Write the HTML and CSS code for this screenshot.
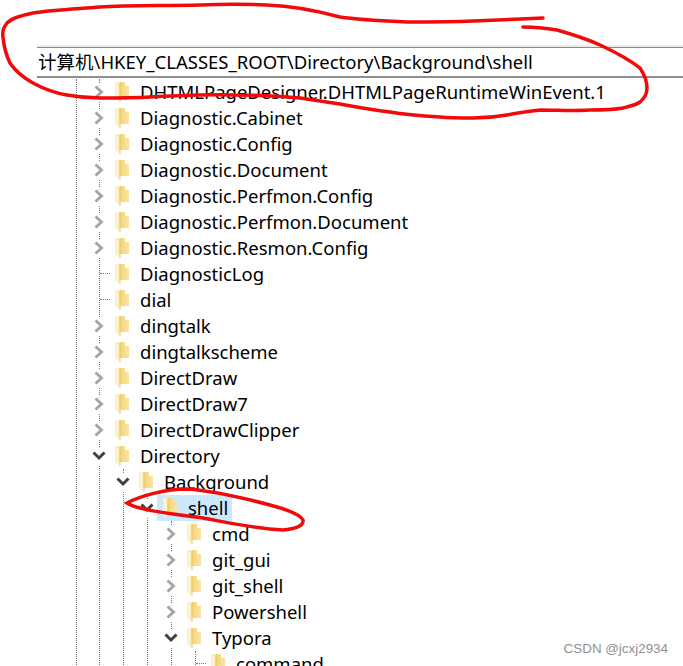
FILE: index.html
```html
<!DOCTYPE html>
<html lang="zh-CN">
<head>
    <meta charset="UTF-8">
    <title>注册表编辑器</title>
    <link rel="stylesheet" href="styles.css">
</head>
<body>
    <svg class="defs" width="0" height="0">
        <defs>
            <linearGradient id="gold" x1="0" y1="0" x2="1" y2="0">
                <stop offset="0" stop-color="#f3cf72"/>
                <stop offset="1" stop-color="#fbe6a6"/>
            </linearGradient>
        </defs>
        <symbol id="folder" viewBox="0 0 14 20">
            <path d="M4 0H10V4H14V16H4Z" fill="url(#gold)"/>
            <path d="M0 0H4.500V20L0 16Z" fill="#fdf1c8"/>
            <path d="M5 1V20" stroke="#e9c76e" stroke-width="1"/>
        </symbol>
        <symbol id="closed" viewBox="0 0 12 14">
            <path d="M2.500 1.500L8.500 7L2.500 12.500" fill="none" stroke="#a6a6a6" stroke-width="3"/>
        </symbol>
        <symbol id="open" viewBox="0 0 14 12">
            <path d="M1.500 2.500L7 8L12.500 2.500" fill="none" stroke="#404040" stroke-width="3"/>
        </symbol>
    </svg>

    <div class="address">计算机\HKEY_CLASSES_ROOT\Directory\Background\shell</div>

    <ul class="tree">
        <li><ul class="branch">
            <li class="row"><span class="toggle"><svg class="chev"><use href="#closed"/></svg></span><svg class="folder"><use href="#folder"/></svg><span class="name">DHTMLPageDesigner.DHTMLPageRuntimeWinEvent.1</span></li>
            <li class="row"><span class="toggle"><svg class="chev"><use href="#closed"/></svg></span><svg class="folder"><use href="#folder"/></svg><span class="name">Diagnostic.Cabinet</span></li>
            <li class="row"><span class="toggle"><svg class="chev"><use href="#closed"/></svg></span><svg class="folder"><use href="#folder"/></svg><span class="name">Diagnostic.Config</span></li>
            <li class="row"><span class="toggle"><svg class="chev"><use href="#closed"/></svg></span><svg class="folder"><use href="#folder"/></svg><span class="name">Diagnostic.Document</span></li>
            <li class="row"><span class="toggle"><svg class="chev"><use href="#closed"/></svg></span><svg class="folder"><use href="#folder"/></svg><span class="name">Diagnostic.Perfmon.Config</span></li>
            <li class="row"><span class="toggle"><svg class="chev"><use href="#closed"/></svg></span><svg class="folder"><use href="#folder"/></svg><span class="name">Diagnostic.Perfmon.Document</span></li>
            <li class="row"><span class="toggle"><svg class="chev"><use href="#closed"/></svg></span><svg class="folder"><use href="#folder"/></svg><span class="name">Diagnostic.Resmon.Config</span></li>
            <li class="row"><span class="toggle leaf"></span><svg class="folder"><use href="#folder"/></svg><span class="name">DiagnosticLog</span></li>
            <li class="row"><span class="toggle leaf"></span><svg class="folder"><use href="#folder"/></svg><span class="name">dial</span></li>
            <li class="row"><span class="toggle"><svg class="chev"><use href="#closed"/></svg></span><svg class="folder"><use href="#folder"/></svg><span class="name">dingtalk</span></li>
            <li class="row"><span class="toggle"><svg class="chev"><use href="#closed"/></svg></span><svg class="folder"><use href="#folder"/></svg><span class="name">dingtalkscheme</span></li>
            <li class="row"><span class="toggle"><svg class="chev"><use href="#closed"/></svg></span><svg class="folder"><use href="#folder"/></svg><span class="name">DirectDraw</span></li>
            <li class="row"><span class="toggle"><svg class="chev"><use href="#closed"/></svg></span><svg class="folder"><use href="#folder"/></svg><span class="name">DirectDraw7</span></li>
            <li class="row"><span class="toggle"><svg class="chev"><use href="#closed"/></svg></span><svg class="folder"><use href="#folder"/></svg><span class="name">DirectDrawClipper</span></li>
            <li class="row"><span class="toggle"><svg class="chev"><use href="#open"/></svg></span><svg class="folder"><use href="#folder"/></svg><span class="name">Directory</span></li>
            <li><ul class="branch">
                <li class="row"><span class="toggle"><svg class="chev"><use href="#open"/></svg></span><svg class="folder"><use href="#folder"/></svg><span class="name">Background</span></li>
                <li><ul class="branch">
                    <li class="row"><span class="toggle"><svg class="chev"><use href="#open"/></svg></span><svg class="folder"><use href="#folder"/></svg><span class="name selected">shell</span></li>
                    <li><ul class="branch">
                        <li class="row"><span class="toggle"><svg class="chev"><use href="#closed"/></svg></span><svg class="folder"><use href="#folder"/></svg><span class="name">cmd</span></li>
                        <li class="row"><span class="toggle"><svg class="chev"><use href="#closed"/></svg></span><svg class="folder"><use href="#folder"/></svg><span class="name">git_gui</span></li>
                        <li class="row"><span class="toggle"><svg class="chev"><use href="#closed"/></svg></span><svg class="folder"><use href="#folder"/></svg><span class="name">git_shell</span></li>
                        <li class="row"><span class="toggle"><svg class="chev"><use href="#closed"/></svg></span><svg class="folder"><use href="#folder"/></svg><span class="name">Powershell</span></li>
                        <li class="row"><span class="toggle"><svg class="chev"><use href="#open"/></svg></span><svg class="folder"><use href="#folder"/></svg><span class="name">Typora</span></li>
                        <li><ul class="branch">
                            <li class="row"><span class="toggle leaf"></span><svg class="folder"><use href="#folder"/></svg><span class="name">command</span></li>
                        </ul></li>
                    </ul></li>
                </ul></li>
            </ul></li>
        </ul></li>
    </ul>

    <!-- marcas de caneta vermelha por cima do print -->
    <svg class="ink" width="683" height="666" viewBox="0 0 683 666">
        <path d="M543 18C520 19 495 20 473 21C450 22 428 22 407 22C385 21 360 20 340 17C318 11 295 6 267 5C245 4 222 4 200 5C165 6 130 5 100 7C75 9 52 10 33 13C20 16 12 18 7 23C3 28 2 32 3 37C4 47 6 55 10 63C16 72 24 78 33 83C44 89 55 93 67 95C78 97 89 98 100 98C117 98 133 98 150 97C178 96 205 94 233 95C256 95 279 96 300 98C314 100 327 102 340 104C357 107 373 110 390 112C407 115 423 116 440 117C451 118 462 118 473 118C485 118 496 117 507 115C518 113 529 111 540 110C557 110 573 111 590 110C602 110 613 110 623 108C631 106 636 105 640 102C645 98 647 93 647 88C647 80 644 74 640 68C630 60 615 52 600 45C585 38 571 34 557 30C545 28 534 27 523 27" fill="none" stroke="#f00a0a" stroke-width="3.500" stroke-linecap="round"/>
        <path d="M270 505C240 497 215 491 187 489C165 489 140 496 127 503C140 511 175 514 203 518C225 522 250 528 283 530C295 529 304 526 303 520C300 514 285 509 270 505" fill="none" stroke="#f00a0a" stroke-width="3.500" stroke-linecap="round"/>
    </svg>

    <div class="mark">CSDN @jcxj2934</div>
</body>
</html>
```

FILE: styles.css
```css
html, body {
    margin: 0;
    height: 666px;
    overflow: hidden;
    background-color: #fff;
}

body {
    font-family: "Noto Sans", "Noto Sans CJK SC", sans-serif;
    color: #000;
    position: relative;
}

.defs {
    display: block;
    height: 0;
}

.address {
    margin: 47px 0 0 37px;
    padding-left: 1px;
    height: 28px;
    line-height: 28px;
    font-size: 18.500px;
    border-top: 1px solid #8a8a8a;
    border-bottom: 2px solid #8f8f8f;
    box-shadow: 0 -2px 0 #ececec;
    white-space: nowrap;
}

ul {
    list-style: none;
    margin: 0;
    padding: 0;
}

.tree {
    margin: 1px 0 0 76px;
    border-left: 1px dotted #777;
}

.tree > li > .branch {
    margin-left: 22px;
}

.branch {
    margin-left: 23px;
    border-left: 1px dotted #777;
}

.row {
    display: flex;
    align-items: center;
    height: 26px;
}

.toggle {
    flex: none;
    display: flex;
    justify-content: center;
    align-items: center;
    width: 16px;
    height: 18px;
    margin-left: -9px;
    background-color: #fff;
}

.toggle.leaf {
    width: 10px;
    height: 1px;
    margin-left: 0;
    margin-right: -3px;
    background: none;
    border-top: 1px dotted #777;
}

.chev {
    width: 14px;
    height: 14px;
}

.folder {
    flex: none;
    position: relative;
    width: 14px;
    height: 20px;
    margin-left: 8px;
}

.name {
    margin-left: 11px;
    font-size: 18.500px;
    line-height: 26px;
    white-space: nowrap;
}

.selected {
    margin-left: -20px;
    padding: 0 4px 0 31px;
    background-color: #cce8ff;
}

.ink {
    position: absolute;
    left: 0;
    top: 0;
}

.mark {
    position: absolute;
    right: 15px;
    top: 641px;
    font-family: "Liberation Sans", sans-serif;
    font-size: 13.400px;
    color: #8f8f8f;
}
```
